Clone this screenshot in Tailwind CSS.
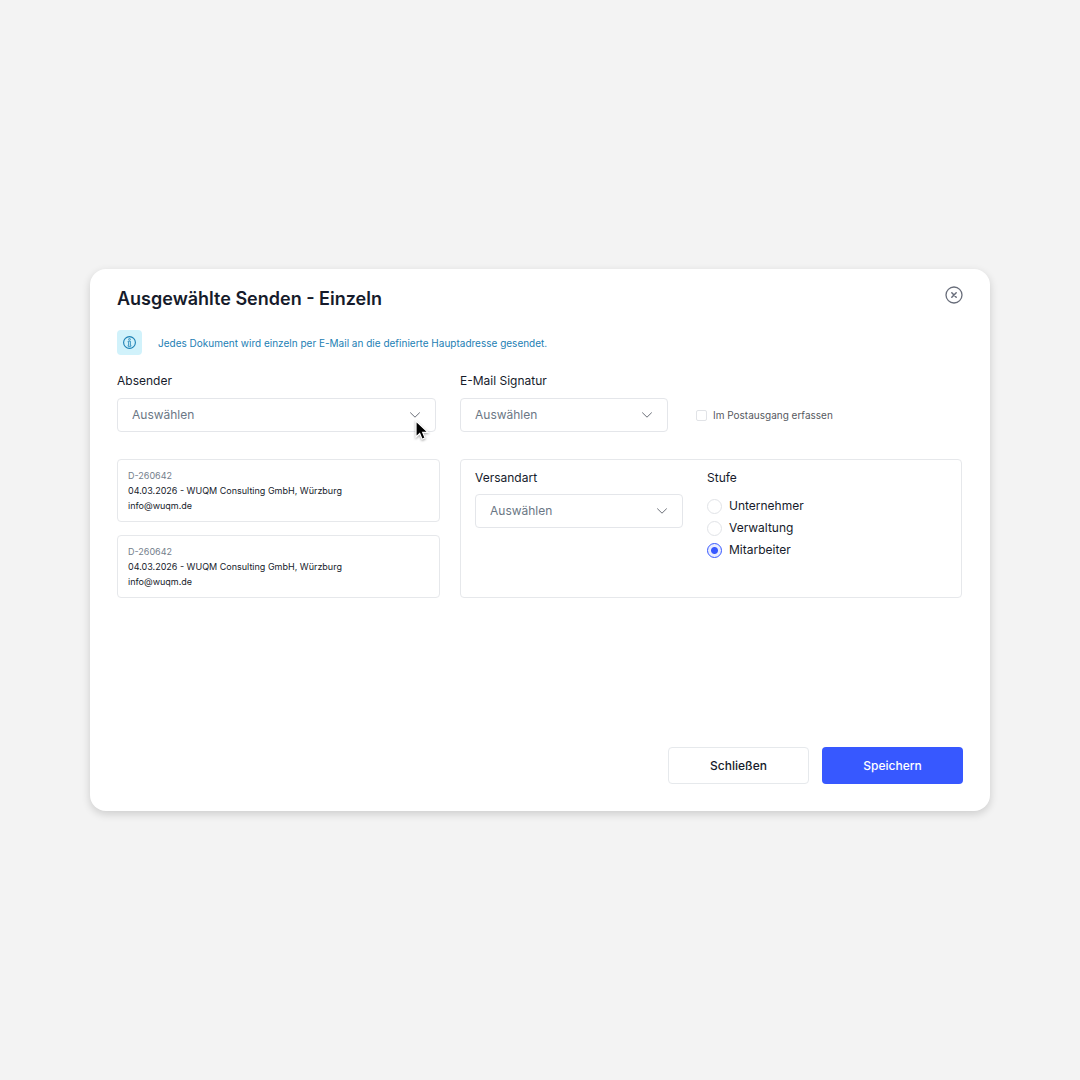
<!DOCTYPE html>
<html lang="de">
<head>
  <meta charset="UTF-8" />
  <meta name="viewport" content="width=device-width, initial-scale=1.0" />
  <title>Ausgewählte Senden - Einzeln</title>
  <script src="https://cdn.jsdelivr.net/npm/@tailwindcss/browser@4"></script>
</head>
<body class="bg-[#f3f3f3] font-['Inter',sans-serif] text-[#161b2b] flex items-center justify-center min-h-screen">

  <form role="dialog" aria-labelledby="dialog-title" class="w-full max-w-[900px] bg-white rounded-2xl shadow-[0_3px_8px_rgba(0,0,0,0.16)] px-[27px] pt-4 pb-[27px]">
    <!-- Header -->
    <header class="flex items-start justify-between">
      <h1 id="dialog-title" class="text-lg leading-6 font-semibold pt-0.5">Ausgewählte Senden - Einzeln</h1>
      <button type="button" aria-label="Dialog schließen" class="text-[#686d7a] pt-px">
        <svg class="size-[18px]" viewBox="0 0 18 18" fill="none" stroke="currentColor">
          <circle cx="9" cy="9" r="8" stroke-width="1.3" />
          <path d="M6.8 6.8l4.4 4.4M11.2 6.8l-4.4 4.4" stroke-width="1.5" stroke-linecap="round" />
        </svg>
      </button>
    </header>

    <!-- Info -->
    <div class="flex items-center gap-4 mt-[19px]">
      <span class="flex items-center justify-center size-[25px] rounded bg-[#d1f2fb] text-[#1c80b4]">
        <svg class="size-[13px]" viewBox="0 0 13 13" fill="none" stroke="currentColor">
          <circle cx="6.5" cy="6.5" r="5.9" stroke-width="1.1" />
          <rect x="5.6" y="2.5" width="1.8" height="1.6" rx=".8" stroke-width=".8" />
          <path d="M5.1 5.2h2.3v4h.5v1.1H5.1V9.2h.5V6.2h-.5z" stroke-width=".8" stroke-linejoin="round" />
        </svg>
      </span>
      <p class="text-[10px] leading-4 text-[#1c80b4]">Jedes Dokument wird einzeln per E-Mail an die definierte Hauptadresse gesendet.</p>
    </div>

    <!-- Sender and signature -->
    <div class="grid grid-cols-[323fr_502fr] gap-5 mt-[18px] pr-px">
      <div class="pr-1">
        <label for="absender" class="block text-xs">Absender</label>
        <div class="relative mt-[9px]">
          <select id="absender" class="appearance-none w-full h-[34px] pl-[14px] pr-9 border border-[#e4e6ea] rounded bg-white text-xs text-[#6b7785]">
            <option>Auswählen</option>
          </select>
          <svg class="absolute right-[15px] top-3 w-3 h-[10px] text-[#6b6f78] pointer-events-none" viewBox="0 0 12 10" fill="none" stroke="currentColor">
            <path d="M1.5 2.8L6 7.2l4.5-4.4" stroke-linecap="round" stroke-linejoin="round" />
          </svg>
          <!-- Mouse pointer -->
          <svg class="absolute right-[7px] top-[22px] w-[14px] h-[22px] pointer-events-none drop-shadow-[0_1px_1px_rgba(0,0,0,0.35)]" viewBox="0 0 14 22">
            <path d="M1 1v16l3.7-3.5 2.4 5.7 3-1.3-2.4-5.5H13z" fill="#000" stroke="#fff" stroke-width="1.2" />
          </svg>
        </div>
      </div>

      <div class="flex items-end gap-7">
        <div class="w-[208px]">
          <label for="signatur" class="block text-xs">E-Mail Signatur</label>
          <div class="relative mt-[9px]">
            <select id="signatur" class="appearance-none w-full h-[34px] pl-[14px] pr-9 border border-[#e4e6ea] rounded bg-white text-xs text-[#6b7785]">
              <option>Auswählen</option>
            </select>
            <svg class="absolute right-[15px] top-3 w-3 h-[10px] text-[#6b6f78] pointer-events-none" viewBox="0 0 12 10" fill="none" stroke="currentColor">
              <path d="M1.5 2.8L6 7.2l4.5-4.4" stroke-linecap="round" stroke-linejoin="round" />
            </svg>
          </div>
        </div>
        <label class="flex items-center gap-[6px] h-[34px] text-[10px] text-[#565960]">
          <input type="checkbox" class="appearance-none size-[11px] border border-[#e1e3e7] rounded-xs bg-white checked:bg-[#3758ff]" />
          Im Postausgang erfassen
        </label>
      </div>
    </div>

    <!-- Documents and delivery -->
    <div class="grid grid-cols-[323fr_502fr] gap-5 mt-[27px] pr-px">
      <ul class="flex flex-col gap-[13px] text-[9px] leading-[15px]">
        <li class="border border-[#e6e8eb] rounded px-[10px] py-2">
          <p class="text-[#74808c]">D-260642</p>
          <p>04.03.2026 - WUQM Consulting GmbH, Würzburg</p>
          <p>info@wuqm.de</p>
        </li>
        <li class="border border-[#e6e8eb] rounded px-[10px] py-2">
          <p class="text-[#74808c]">D-260642</p>
          <p>04.03.2026 - WUQM Consulting GmbH, Würzburg</p>
          <p>info@wuqm.de</p>
        </li>
      </ul>

      <div class="flex gap-6 border border-[#e6e8eb] rounded px-[14px] py-[10px]">
        <div class="w-[208px]">
          <label for="versandart" class="block text-xs">Versandart</label>
          <div class="relative mt-2">
            <select id="versandart" class="appearance-none w-full h-[34px] pl-[14px] pr-9 border border-[#e4e6ea] rounded bg-white text-xs text-[#6b7785]">
              <option>Auswählen</option>
            </select>
            <svg class="absolute right-[15px] top-3 w-3 h-[10px] text-[#6b6f78] pointer-events-none" viewBox="0 0 12 10" fill="none" stroke="currentColor">
              <path d="M1.5 2.8L6 7.2l4.5-4.4" stroke-linecap="round" stroke-linejoin="round" />
            </svg>
          </div>
        </div>

        <fieldset class="text-xs">
          <legend>Stufe</legend>
          <div class="flex flex-col mt-[9px] leading-[22px]">
            <label class="flex items-center gap-[7px]">
              <input type="radio" name="stufe" class="appearance-none size-[15px] border border-[#e1e3e7] rounded-full bg-white checked:border-[#3758ff] checked:bg-[radial-gradient(circle,#3758ff_0_3px,#e9edff_4px)]" />
              Unternehmer
            </label>
            <label class="flex items-center gap-[7px]">
              <input type="radio" name="stufe" class="appearance-none size-[15px] border border-[#e1e3e7] rounded-full bg-white checked:border-[#3758ff] checked:bg-[radial-gradient(circle,#3758ff_0_3px,#e9edff_4px)]" />
              Verwaltung
            </label>
            <label class="flex items-center gap-[7px]">
              <input type="radio" name="stufe" checked class="appearance-none size-[15px] border border-[#e1e3e7] rounded-full bg-white checked:border-[#3758ff] checked:bg-[radial-gradient(circle,#3758ff_0_3px,#e9edff_4px)]" />
              Mitarbeiter
            </label>
          </div>
        </fieldset>
      </div>
    </div>

    <!-- Actions -->
    <footer class="flex justify-end gap-[13px] mt-[149px] text-xs font-medium">
      <button type="button" class="w-[141px] h-[37px] border border-[#e6e9ec] rounded bg-white">Schließen</button>
      <button type="submit" class="w-[141px] h-[37px] rounded bg-[#3758ff] text-white">Speichern</button>
    </footer>
  </form>

</body>
</html>
